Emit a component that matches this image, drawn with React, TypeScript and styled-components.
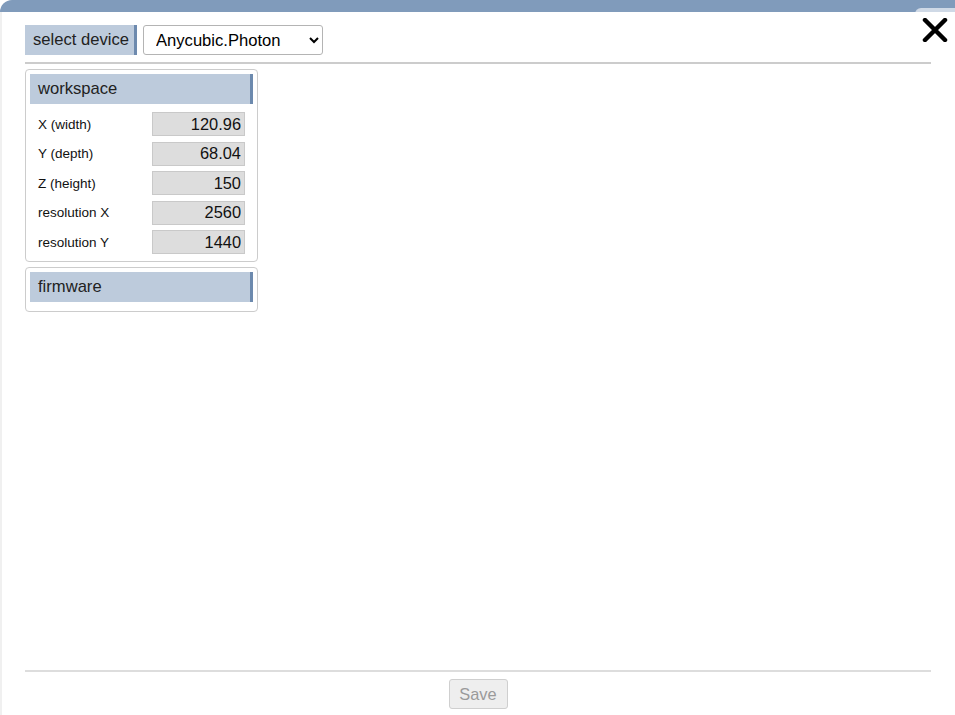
import React from "react";
import styled, { createGlobalStyle } from "styled-components";

const GlobalStyle = createGlobalStyle`
  html, body {
    margin: 0;
    padding: 0;
    background: #ffffff;
    font-family: "Liberation Sans", Arial, sans-serif;
  }
`;

const Dialog = styled("div")`
  position: relative;
  width: 955px;
  height: 715px;
  display: flex;
  flex-direction: column;
  overflow: hidden;
`;

const TopStrip = styled("div")`
  height: 12px;
  background: #809bbb;
  border-radius: 14px 0 0 0;
  flex-shrink: 0;
`;

const Body = styled("div")`
  flex: 1;
  display: flex;
  flex-direction: column;
  border-left: 2px solid #f0f0f0;
  padding: 13px 24px 0 23px;
`;

const CloseButton = styled("button")`
  position: absolute;
  top: 8px;
  right: 0;
  width: 40px;
  height: 40px;
  border: none;
  border-radius: 6px 0 0 0;
  background: linear-gradient(#cfd9e6 0, #cfd9e6 4px, #ffffff 4px);
  padding: 4px 0 0 0;
  cursor: pointer;
  display: flex;
  align-items: center;
  justify-content: center;
`;

const DeviceBar = styled("div")`
  display: flex;
  align-items: center;
  gap: 6px;
  padding-bottom: 7px;
  border-bottom: 2px solid #cccccc;
`;

const Label = styled("div")`
  background: #bdcbdc;
  border-right: 3px solid #6d8aae;
  color: #222;
  font-size: 16.6px;
  height: 30px;
  line-height: 29px;
  width: 112px;
  padding-left: 8px;
  box-sizing: border-box;
  white-space: nowrap;
`;

const Select = styled("select")`
  font-family: "Liberation Sans", Arial, sans-serif;
  font-size: 16.6px;
  color: #000;
  width: 180px;
  height: 30px;
  padding: 0 8px;
  border: 1px solid #b4b4b4;
  border-radius: 3px;
  background: #fff;
`;

const Content = styled("div")`
  flex: 1;
  display: flex;
  flex-direction: column;
  gap: 5px;
  padding-top: 5px;
`;

const Card = styled("div")<{ $bottom?: number }>`
  width: 233px;
  box-sizing: border-box;
  border: 1px solid #cccccc;
  border-radius: 4px;
  padding: 4px 4px ${(p) => p.$bottom ?? 4}px 4px;
`;

const CardHeader = styled("div")`
  background: #bdcbdc;
  border-right: 3px solid #6d8aae;
  color: #222;
  font-size: 16.6px;
  height: 30px;
  line-height: 29px;
  padding-left: 8px;
`;

const Rows = styled("div")`
  display: flex;
  flex-direction: column;
  gap: 5.5px;
  padding: 8px 8px 3px 8px;
`;

const Row = styled("div")`
  display: flex;
  align-items: center;
  justify-content: space-between;
`;

const RowLabel = styled("span")`
  font-size: 13.5px;
  color: #111;
`;

const Input = styled("input")`
  font-family: "Liberation Sans", Arial, sans-serif;
  font-size: 16.4px;
  color: #111;
  width: 93px;
  height: 24px;
  box-sizing: border-box;
  text-align: right;
  padding: 0 3px;
  border: 1px solid #c9c9c9;
  background: #dddddd;
`;

const Footer = styled("div")`
  border-top: 2px solid #dddddd;
  display: flex;
  justify-content: center;
  padding: 7px 0 6px;
`;

const SaveButton = styled("button")`
  font-family: "Liberation Sans", Arial, sans-serif;
  font-size: 16.4px;
  color: #9a9a9a;
  background: #eeeeee;
  border: 1px solid #cfcfcf;
  border-radius: 3px;
  width: 59px;
  height: 30px;
`;

const fields = [
  { label: "X (width)", value: "120.96" },
  { label: "Y (depth)", value: "68.04" },
  { label: "Z (height)", value: "150" },
  { label: "resolution X", value: "2560" },
  { label: "resolution Y", value: "1440" },
];

export default function App() {
  return (
    <>
      <GlobalStyle />
      <Dialog>
        <TopStrip />
        <CloseButton aria-label="close">
          <svg width="26" height="24" viewBox="0 0 26 24">
            <path
              d="M3 2 L23 22 M23 2 L3 22"
              stroke="#000"
              strokeWidth="4.5"
              strokeLinecap="round"
            />
          </svg>
        </CloseButton>
        <Body>
          <DeviceBar>
            <Label>select device</Label>
            <Select defaultValue="Anycubic.Photon">
              <option>Anycubic.Photon</option>
            </Select>
          </DeviceBar>
          <Content>
            <Card>
              <CardHeader>workspace</CardHeader>
              <Rows>
                {fields.map((f) => (
                  <Row key={f.label}>
                    <RowLabel>{f.label}</RowLabel>
                    <Input defaultValue={f.value} />
                  </Row>
                ))}
              </Rows>
            </Card>
            <Card $bottom={9}>
              <CardHeader>firmware</CardHeader>
            </Card>
          </Content>
          <Footer>
            <SaveButton disabled>Save</SaveButton>
          </Footer>
        </Body>
      </Dialog>
    </>
  );
}
